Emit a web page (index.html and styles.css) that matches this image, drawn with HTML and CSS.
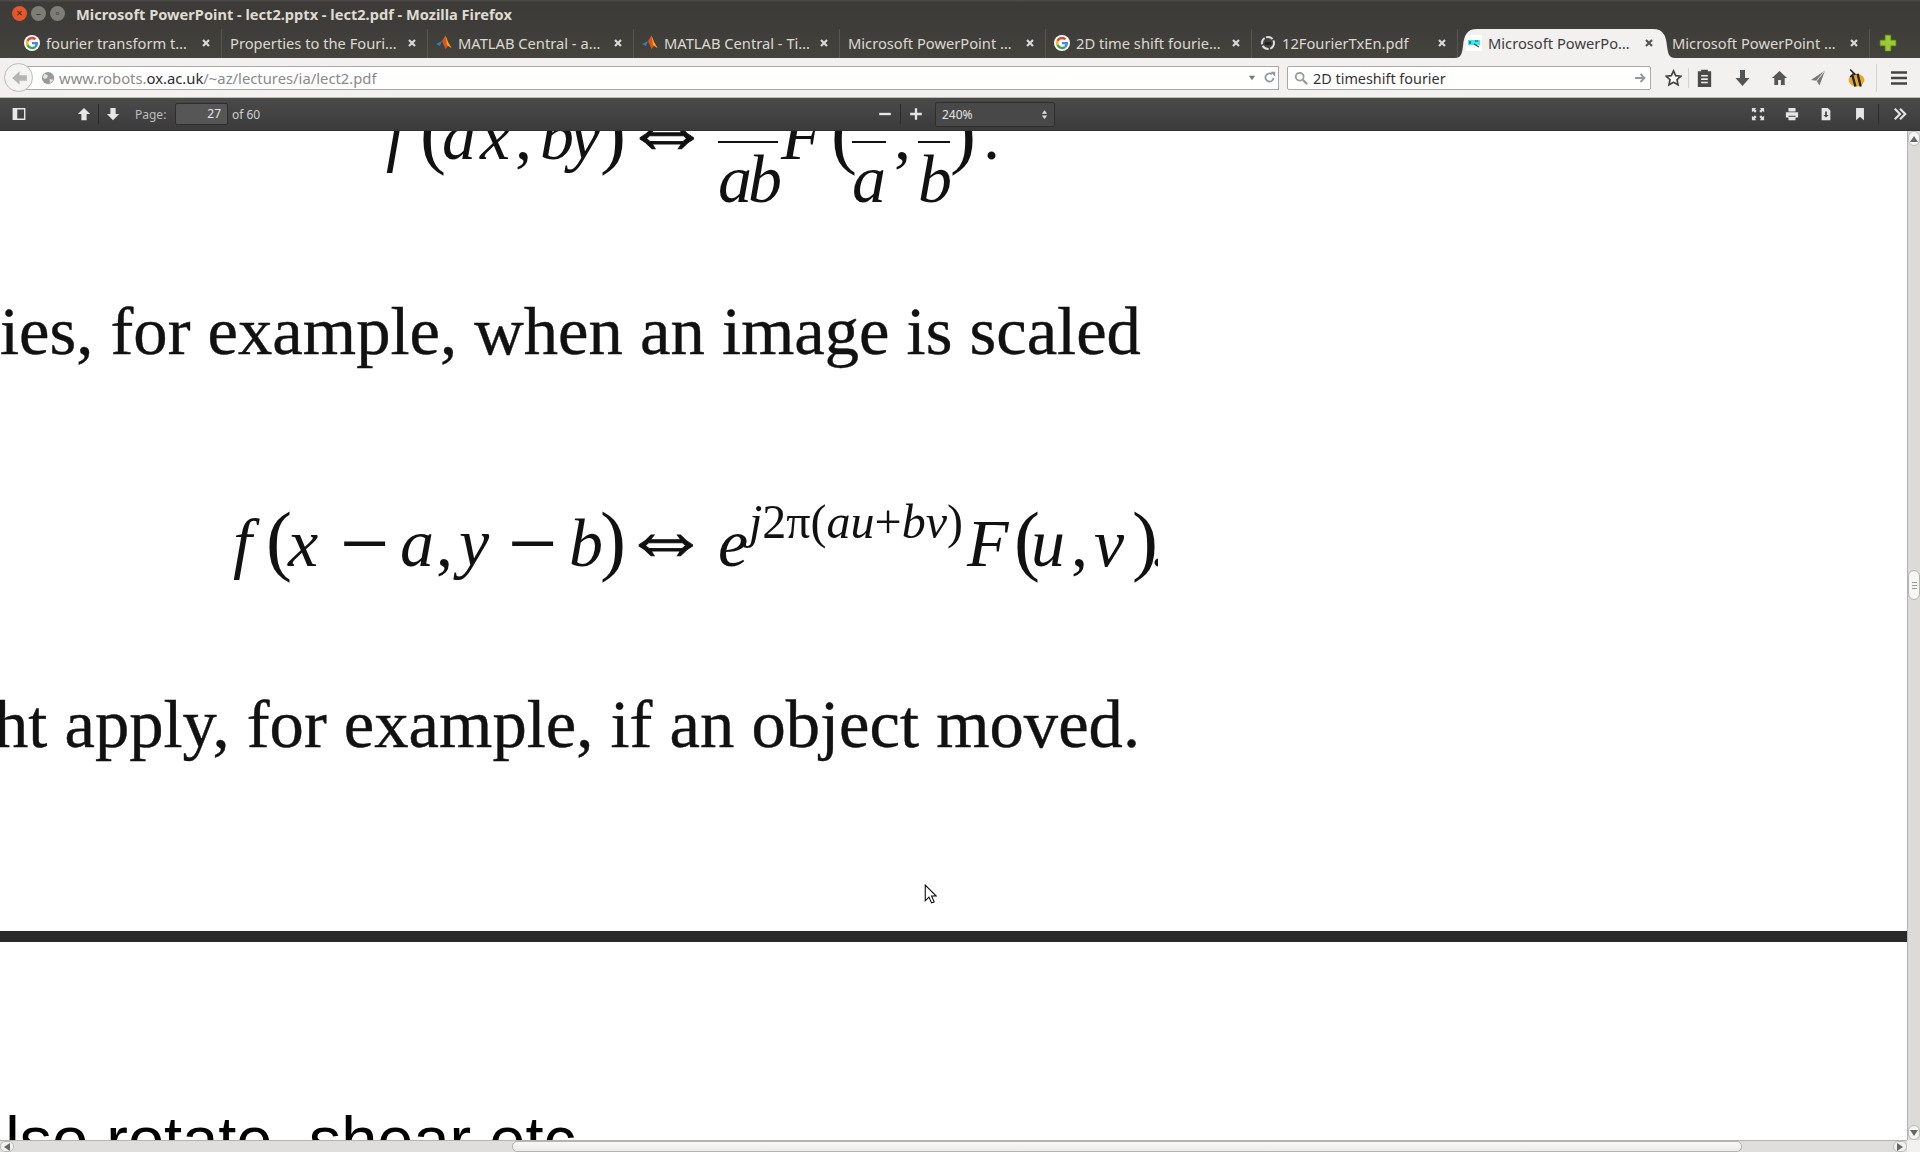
FILE: index.html
```html
<!DOCTYPE html>
<html lang="en">
<head>
    <meta charset="UTF-8">
    <title>Microsoft PowerPoint - lect2.pptx - lect2.pdf - Mozilla Firefox</title>
    <link rel="stylesheet" href="styles.css">
</head>
<body>
    <svg class="defs" width="0" height="0">
        <symbol id="g-logo" viewBox="0 0 48 48">
            <circle cx="24" cy="24" r="24" fill="#fff"/>
            <path fill="#ea4335" d="M24 13c3 0 5.400 1 7.300 2.800l5.300-5.300C33.300 7.500 29 5.500 24 5.500c-7.300 0-13.500 4.200-16.500 10.200l6.200 4.800C15.100 16.100 19.200 13 24 13z"/>
            <path fill="#4285f4" d="M42 24.500c0-1.300-.1-2.500-.3-3.700H24v7h10.100c-.4 2.300-1.800 4.300-3.800 5.600l6 4.600C39.800 34.700 42 30 42 24.500z"/>
            <path fill="#fbbc05" d="M13.700 27.500c-.4-1.100-.6-2.300-.6-3.500s.2-2.400.6-3.500l-6.200-4.800C6.200 18.200 5.500 21 5.500 24s.7 5.800 2 8.300l6.200-4.800z"/>
            <path fill="#34a853" d="M24 42.500c5 0 9.200-1.600 12.300-4.500l-6-4.600c-1.700 1.100-3.800 1.800-6.300 1.800-4.800 0-8.900-3.200-10.300-7.500l-6.200 4.800c3 6 9.200 10 16.500 10z"/>
        </symbol>
        <symbol id="m-logo" viewBox="0 0 16 16">
            <path fill="#2f7fb5" d="M0 9l4-2 2-1-2 5z"/>
            <path fill="#d9541e" d="M6 6l3.500-5.500L12 7l3.500 6-3.500-2-2.500 3z"/>
            <path fill="#f3a51e" d="M9.500.5L12 7l3.500 6-4.500-3z"/>
        </symbol>
        <symbol id="x-mark" viewBox="0 0 10 10">
            <path d="M2 2l6 6M8 2l-6 6" stroke="currentColor" stroke-width="2.200" fill="none"/>
        </symbol>
    </svg>

    <header class="titlebar">
        <div class="winbtns">
            <span class="winbtn close">×</span>
            <span class="winbtn">–</span>
            <span class="winbtn">▫</span>
        </div>
        <div class="wintitle">Microsoft PowerPoint - lect2.pptx - lect2.pdf - Mozilla Firefox</div>
    </header>

    <nav class="tabs">
        <div class="tab"><svg class="favicon"><use href="#g-logo"/></svg><span class="tabtext">fourier transform t…</span><svg class="tabx"><use href="#x-mark"/></svg></div>
        <div class="tab"><span class="tabtext">Properties to the Fouri…</span><svg class="tabx"><use href="#x-mark"/></svg></div>
        <div class="tab"><svg class="favicon"><use href="#m-logo"/></svg><span class="tabtext">MATLAB Central - a…</span><svg class="tabx"><use href="#x-mark"/></svg></div>
        <div class="tab"><svg class="favicon"><use href="#m-logo"/></svg><span class="tabtext">MATLAB Central - Ti…</span><svg class="tabx"><use href="#x-mark"/></svg></div>
        <div class="tab"><span class="tabtext">Microsoft PowerPoint …</span><svg class="tabx"><use href="#x-mark"/></svg></div>
        <div class="tab"><svg class="favicon"><use href="#g-logo"/></svg><span class="tabtext">2D time shift fourie…</span><svg class="tabx"><use href="#x-mark"/></svg></div>
        <div class="tab"><svg class="favicon" viewBox="0 0 16 16"><circle cx="8" cy="8" r="6" fill="none" stroke="#ddd" stroke-width="2" stroke-dasharray="7 1.500"/><path d="M5 7h6v3H5z" fill="#222"/></svg><span class="tabtext">12FourierTxEn.pdf</span><svg class="tabx"><use href="#x-mark"/></svg></div>
        <div class="tab active">
            <svg class="tabshape" viewBox="0 0 220 29" preserveAspectRatio="none"><path d="M0 29c6 0 7-4 8-12C9 6 12 0 22 0h176c10 0 13 6 14 17 1 8 2 12 8 12z" fill="#f2f1f0"/></svg>
            <svg class="favicon" viewBox="0 0 16 16"><rect width="16" height="16" fill="#fff"/><rect x="2" y="5" width="12" height="5" fill="#3fe6e6"/><path d="M4 6v3M9 6h3M8 9l5 3" stroke="#246" stroke-width="1.200" fill="none"/></svg>
            <span class="tabtext">Microsoft PowerPo…</span><svg class="tabx"><use href="#x-mark"/></svg>
        </div>
        <div class="tab"><span class="tabtext">Microsoft PowerPoint …</span><svg class="tabx"><use href="#x-mark"/></svg></div>
        <svg class="newtab" viewBox="0 0 16 16"><path d="M5.500 1h5v4.500H15v5h-4.500V15h-5v-4.500H1v-5h4.500z" fill="#9c3" stroke="#6d9a22" stroke-width=".6"/></svg>
    </nav>

    <div class="navbar">
        <div class="back"><svg viewBox="0 0 16 16" width="18" height="18"><path d="M8.500 2L2 8l6.500 6V10.500H15v-5H8.500z" fill="#b4b4b4"/></svg></div>
        <div class="urlbar">
            <svg class="globe" viewBox="0 0 16 16"><circle cx="8" cy="8" r="7" fill="#9a9a9a"/><path d="M4 3l4 2-1 3-3 1-2-2zM10 9l4 1-3 4-1-2z" fill="#e4e4e4"/></svg>
            <span class="url">www.robots.<b>ox.ac.uk</b>/~az/lectures/ia/lect2.pdf</span>
            <svg class="urldrop" viewBox="0 0 10 8"><path d="M1 1h8L5 7z" fill="#777"/></svg>
            <svg class="reload" viewBox="0 0 16 16"><path d="M13 8.500A5 5 0 1 1 11 4" stroke="#8c9aa5" stroke-width="2.200" fill="none"/><path d="M9 1h6v6z" fill="#8c9aa5"/></svg>
        </div>
        <div class="searchbar">
            <svg class="searchicon" viewBox="0 0 16 16"><circle cx="6.500" cy="6.500" r="4.500" stroke="#999" stroke-width="2" fill="none"/><path d="M10 10l5 5" stroke="#999" stroke-width="2.500"/></svg>
            <span class="searchtext">2D timeshift fourier</span>
            <svg class="searchgo" viewBox="0 0 12 12"><path d="M1 6h9M6.500 2l4 4-4 4" stroke="#8c9aa5" stroke-width="1.800" fill="none"/></svg>
        </div>
        <svg class="navicon star" viewBox="0 0 18 18"><path d="M9 1.500l2.300 5 5.400.6-4 3.700 1.100 5.400L9 13.500l-4.800 2.700 1.100-5.400-4-3.700 5.400-.6z" fill="#fff" stroke="#444" stroke-width="1.800"/></svg>
        <span class="navsep"></span>
        <svg class="navicon clip" viewBox="0 0 16 18"><path d="M2 3h3V1.500h6V3h3v14H2z" fill="#4a4a4a"/><path d="M5 7h6M5 10h6M5 13h6" stroke="#eee" stroke-width="1.400"/></svg>
        <svg class="navicon down" viewBox="0 0 16 18"><path d="M5.500 1h5v8H15l-7 8-7-8h4.500z" fill="#555"/></svg>
        <svg class="navicon home" viewBox="0 0 18 18"><path d="M9 1.500L1 9h2.500v7.500h4V11h3v5.500h4V9H17z" fill="#555"/></svg>
        <svg class="navicon send" viewBox="0 0 18 18"><path d="M16 1L1 11l6 1 3 5z" fill="#777"/><path d="M16 1L7 12" stroke="#eee"/></svg>
        <svg class="navicon bee" viewBox="0 0 18 18"><ellipse cx="9" cy="11" rx="7.500" ry="6" fill="#e9a820"/><path d="M5 6l3 11M10 5l3 12" stroke="#222" stroke-width="2.200"/><path d="M3 1l5 5M3 8l4-4" stroke="#222" stroke-width="1.500"/></svg>
        <span class="navsep sep2"></span>
        <svg class="navicon menu" viewBox="0 0 18 18"><path d="M1 3.500h16M1 9h16M1 14.500h16" stroke="#444" stroke-width="2.600"/></svg>
    </div>

    <div class="pdfbar">
        <svg class="pdficon sidebar" viewBox="0 0 16 16"><path d="M1.500 2h13v12h-13z" stroke="#e8e8e8" stroke-width="1.600" fill="none"/><path d="M2 2h4v12H2z" fill="#e8e8e8"/></svg>
        <svg class="pdficon up" viewBox="0 0 16 16"><path d="M8 1l7 7h-4v7H5V8H1z" fill="#e6e6e6"/></svg>
        <span class="pdfsep"></span>
        <svg class="pdficon dn" viewBox="0 0 16 16"><path d="M5 1h6v7h4l-7 7-7-7h4z" fill="#e6e6e6"/></svg>
        <span class="pagelabel">Page:</span>
        <span class="pagebox">27</span>
        <span class="pagecount">of 60</span>
        <svg class="pdficon minus" viewBox="0 0 12 12"><path d="M1 6h10" stroke="#e6e6e6" stroke-width="2"/></svg>
        <span class="pdfsep zoomsep"></span>
        <svg class="pdficon plus" viewBox="0 0 12 12"><path d="M1 6h10M6 1v10" stroke="#e6e6e6" stroke-width="2"/></svg>
        <div class="zoomselect"><span>240%</span><svg class="spin" viewBox="0 0 8 12"><path d="M4 1l3 4H1zM4 11L1 7h6z" fill="#ddd"/></svg></div>
        <svg class="pdficon fullscreen" viewBox="0 0 16 16"><path d="M1 1h5L4.500 2.500l2 2-2 2-2-2L1 6zM15 1v5l-1.500-1.500-2 2-2-2 2-2L10 1zM1 15v-5l1.500 1.500 2-2 2 2-2 2L6 15zM15 15h-5l1.500-1.500-2-2 2-2 2 2L15 10z" fill="#ddd"/></svg>
        <svg class="pdficon print" viewBox="0 0 16 16"><path d="M4 1h8v4H4zM1 6h14v6h-3v-2H4v2H1zM4 11h8v4H4z" fill="#e6e6e6"/></svg>
        <svg class="pdficon save" viewBox="0 0 16 16"><path d="M3 1h7l3 3v11H3z" fill="#e6e6e6"/><path d="M7 5h2v4h2l-3 3-3-3h2z" fill="#444"/></svg>
        <svg class="pdficon mark" viewBox="0 0 16 16"><path d="M3.500 1h9v14L8 11l-4.500 4z" fill="#e6e6e6"/></svg>
        <span class="pdfsep endsep"></span>
        <svg class="pdficon more" viewBox="0 0 16 16"><path d="M2 2l6 6-6 6M8 2l6 6-6 6" stroke="#e6e6e6" stroke-width="2.400" fill="none"/></svg>
    </div>

    <main class="viewer">
        <div class="vrow">
            <div class="canvas">
                <div class="math math1">
                    <i>f</i><span class="p">(</span><i>a</i><i>x</i><span>,</span><i>b</i><i>y</i><span class="p">)</span><span class="arrow">⇔</span><span class="frac fab"><i>ab</i></span><i>F</i><span class="p">(</span><span class="frac"><i>a</i></span><span>,</span><span class="frac fb"><i>b</i></span><span class="p">)</span><span>.</span>
                </div>
                <div class="line line1">ies, for example, when an image is scaled</div>
                <div class="math math2">
                    <i>f</i><span class="p">(</span><i>x</i><span class="op">−</span><i>a</i><span>,</span><i>y</i><span class="op">−</span><i>b</i><span class="p">)</span><span class="arrow">⇔</span><i>e</i><span class="sup"><i>j</i>2π(<i>au</i>+<i>bv</i>)</span><i>F</i><span class="p">(</span><i>u</i><span>,</span><i>v</i><span class="p">)</span><span>.</span>
                </div>
                <div class="line line2">ht apply, for example, if an object moved.</div>
                <svg class="cursor" viewBox="0 0 12 20"><path d="M1 1v15l3.500-3.500L7 18l2.500-1-2.500-5.500h4.500z" fill="#fff" stroke="#000"/></svg>
                <div class="pagegap"></div>
                <div class="slide">also rotate, shear etc</div>
            </div>
            <div class="vscroll">
                <div class="sbtn"><svg viewBox="0 0 8 6" width="8" height="6"><path d="M4 0l4 6H0z" fill="#666"/></svg></div>
                <div class="vspace"></div>
                <div class="vthumb"><span></span><span></span><span></span></div>
                <div class="vrest"></div>
                <div class="sbtn"><svg viewBox="0 0 8 6" width="8" height="6"><path d="M0 0h8L4 6z" fill="#666"/></svg></div>
            </div>
        </div>
        <div class="hscroll">
            <div class="hbtn"><svg viewBox="0 0 6 8" width="6" height="8"><path d="M0 4l6-4v8z" fill="#666"/></svg></div>
            <div class="hspace"></div>
            <div class="hthumb"></div>
            <div class="hrest"></div>
            <div class="hbtn"><svg viewBox="0 0 6 8" width="6" height="8"><path d="M6 4L0 0v8z" fill="#666"/></svg></div>
            <div class="corner"></div>
        </div>
    </main>
</body>
</html>
```

FILE: styles.css
```css
* {
    box-sizing: border-box;
}
html, body {
    margin: 0;
    height: 100%;
    overflow: hidden;
}
body {
    width: 1920px;
    height: 1152px;
    display: flex;
    flex-direction: column;
    font-family: "Noto Sans", "Open Sans", sans-serif;
    background-color: #fff;
}
.defs {
    position: absolute;
}

/* window title */
.titlebar {
    height: 29px;
    flex: none;
    display: flex;
    align-items: center;
    padding-bottom: 2px;
    background: linear-gradient(#4a4945 0, #4a4945 1px, #3c3b37 2px, #3e3d39 100%);
    color: #dfdbd2;
}
.winbtns {
    display: flex;
    gap: 4px;
    width: 76px;
    padding-left: 12px;
}
.winbtn {
    width: 15px;
    height: 15px;
    border-radius: 50%;
    background-color: #7e7d78;
    color: #3c3b37;
    font-size: 11px;
    line-height: 14px;
    text-align: center;
}
.winbtn.close {
    background-color: #e2572c;
    color: #4a1c0c;
}
.wintitle {
    font-size: 14.600px;
    font-weight: 700;
    white-space: nowrap;
}

/* tab strip */
.tabs {
    height: 29px;
    flex: none;
    display: flex;
    padding-left: 16px;
    background: linear-gradient(#3e3d39, #45433e);
}
.tab {
    position: relative;
    width: 206px;
    flex: none;
    display: flex;
    align-items: center;
    padding: 0 10px 2px 8px;
    color: #dcd9d2;
    font-size: 14.700px;
    border-right: 1px solid #57554f;
    white-space: nowrap;
}
.tab.active {
    color: #3c3c3c;
    border-right: none;
}
.tabshape {
    position: absolute;
    left: -3px;
    top: 0;
    width: 220px;
    height: 29px;
}
.favicon {
    width: 16px;
    height: 16px;
    flex: none;
    margin-right: 6px;
    position: relative;
}
.tabtext {
    flex: 1;
    overflow: hidden;
    position: relative;
}
.tabx {
    width: 10px;
    height: 10px;
    flex: none;
    color: #d8d8d8;
    position: relative;
}
.tab.active .tabx {
    color: #555;
}
.newtab {
    width: 18px;
    height: 18px;
    margin: 5px 0 0 9px;
}

/* address row */
.navbar {
    height: 40px;
    flex: none;
    display: flex;
    align-items: center;
    position: relative;
    background-color: #f2f1f0;
    border-bottom: 1px solid #bdbbb8;
    padding-left: 24px;
}
.back {
    position: absolute;
    left: 4px;
    top: 5px;
    width: 29px;
    height: 29px;
    border-radius: 50%;
    border: 1px solid #bcbcbc;
    background-color: #f4f4f3;
    display: flex;
    align-items: center;
    justify-content: center;
    z-index: 1;
}
.urlbar, .searchbar {
    height: 24px;
    display: flex;
    align-items: center;
    background-color: #fff;
    border: 1px solid #a9a8a6;
    flex: none;
}
.urlbar {
    width: 1255px;
    padding-left: 16px;
}
.globe {
    width: 14px;
    height: 14px;
    margin-right: 4px;
}
.url {
    flex: 1;
    padding-top: 1px;
    font-size: 14.800px;
    color: #8a8a8a;
}
.url b {
    font-weight: 400;
    color: #2c2c2c;
}
.urldrop {
    width: 8px;
    height: 6px;
    margin-right: 7px;
}
.reload {
    width: 13px;
    height: 13px;
    margin-right: 2px;
}
.searchbar {
    width: 364px;
    margin-left: 8px;
    padding: 0 4px 0 6px;
    border-radius: 2px;
}
.searchicon {
    width: 14px;
    height: 14px;
    margin-right: 5px;
}
.searchtext {
    flex: 1;
    padding-top: 1px;
    font-size: 14.400px;
    color: #333;
}
.searchgo {
    width: 12px;
    height: 12px;
}
.navicon {
    width: 17px;
    height: 18px;
    flex: none;
}
.navicon.star {
    margin-left: 14px;
}
.navsep {
    width: 1px;
    height: 20px;
    background-color: #d4d3d1;
    margin: 0 6px;
    flex: none;
}
.navicon.clip {
    width: 19px;
    height: 20px;
}
.navicon.down,
.navicon.home,
.navicon.bee {
    margin-left: 20px;
}
.navicon.send {
    margin-left: 22px;
}
.navicon.bee {
    width: 19px;
    height: 20px;
}
.sep2 {
    height: 28px;
    margin: 0 0 0 10px;
}
.navicon.menu {
    width: 18px;
    margin-left: 13px;
}

/* pdf.js toolbar */
.pdfbar {
    height: 33px;
    flex: none;
    display: flex;
    align-items: center;
    background: linear-gradient(#4a4a4a, #3b3b3b);
    border-bottom: 1px solid #333;
    color: #d6d6d6;
    font-size: 12px;
    padding-left: 12px;
}
.pdficon {
    width: 14px;
    height: 14px;
    flex: none;
}
.up {
    margin-left: 51px;
}
.pdfsep {
    width: 1px;
    height: 20px;
    margin: 0 7px;
    background-color: #2a2a2a;
    flex: none;
}
.pagelabel {
    margin-left: 15px;
    width: 40px;
    color: #bdbdbd;
}
.pagebox {
    width: 53px;
    height: 22px;
    line-height: 20px;
    text-align: right;
    padding-right: 6px;
    background-color: #565656;
    border: 1px solid #2e2e2e;
    border-radius: 2px;
    color: #e4e4e4;
}
.pagecount {
    margin-left: 4px;
    width: 40px;
    color: #d0d0d0;
}
.minus {
    margin-left: 606px;
}
.zoomsep {
    margin: 0 8px;
}
.zoomselect {
    width: 120px;
    height: 25px;
    margin-left: 12px;
    padding: 0 6px;
    display: flex;
    align-items: center;
    justify-content: space-between;
    border: 1px solid #2e2e2e;
    border-radius: 2px;
    background-color: #484848;
    color: #e4e4e4;
}
.spin {
    width: 7px;
    height: 11px;
}
.fullscreen {
    margin-left: 696px;
}
.print, .save, .mark {
    margin-left: 20px;
}
.endsep {
    margin: 0 0 0 11px;
    background-color: #2a2a2a;
}
.more {
    margin-left: 14px;
}

/* document area: the pdf canvas is a free page, its lines sit at their own spots */
.viewer {
    flex: 1;
    display: flex;
    flex-direction: column;
    min-height: 0;
}
.vrow {
    flex: 1;
    display: flex;
    min-height: 0;
}
.canvas {
    position: relative;
    flex: 1;
    overflow: hidden;
    background-color: #fff;
    color: #111;
}
.line {
    position: absolute;
    font-family: "Liberation Serif", serif;
    font-size: 68.600px;
    line-height: 76px;
    white-space: nowrap;
    -webkit-text-stroke: .4px #111;
    filter: blur(.6px);
}
.line1 {
    left: 0;
    top: 162px;
}
.line2 {
    left: -6px;
    top: 555px;
}

/* formulas: one grid column per glyph, all on one baseline */
.math {
    position: absolute;
    display: grid;
    grid-auto-flow: column;
    align-items: baseline;
    justify-content: start;
    font-family: "Liberation Serif", serif;
    font-size: 68px;
    line-height: 80px;
    white-space: nowrap;
    overflow: hidden;
    filter: blur(.5px);
}
.math1 {
    left: 386px;
    top: -35px;
    width: 610px;
    height: 125px;
    grid-template-columns: 34px 22px 38px 35px 25px 30px 30px 22px 96px 63px 50px 21px 42px 24px 32px 33px 12px;
}
.math2 {
    left: 233px;
    top: 352px;
    width: 925px;
    height: 120px;
    padding-top: 20px;
    grid-template-columns: 33px 22px 52px 60px 36px 23px 49px 61px 31px 21px 97px 31px 218px 47px 17px 40px 23px 38px 18px 12px;
}
.p {
    font-size: 78px;
    line-height: 70px;
}
.op {
    font-size: 88px;
    line-height: 60px;
    transform: translateY(7px);
}
.arrow {
    font-size: 90px;
    line-height: 60px;
    -webkit-text-stroke: 1px #111;
}
.frac {
    width: 34px;
    border-top: 2px solid #111;
    line-height: 72px;
    transform: translateY(43px);
}
.fab {
    width: 60px;
    letter-spacing: -4px;
}
.fb {
    width: 32px;
}
.sup {
    font-size: 48px;
    transform: translateY(-28px);
}
.cursor {
    position: absolute;
    left: 924px;
    top: 753px;
    width: 13px;
    height: 21px;
}
.pagegap {
    position: absolute;
    left: 0;
    right: 0;
    top: 800px;
    height: 11px;
    background-color: #2a2a2a;
}
.slide {
    position: absolute;
    left: -31px;
    top: 971px;
    font-family: "Liberation Sans", sans-serif;
    font-size: 65px;
    line-height: 76px;
    color: #000;
    white-space: nowrap;
}

/* gtk style scrollbars */
.vscroll {
    width: 13px;
    flex: none;
    display: flex;
    flex-direction: column;
    background-color: #dcdbd9;
    border-left: 1px solid #b5b4b2;
}
.sbtn {
    height: 15px;
    flex: none;
    display: flex;
    align-items: center;
    justify-content: center;
    background-color: #f5f5f4;
    border: 1px solid #bbb;
    border-radius: 6px;
}
.vspace {
    height: 424px;
    flex: none;
}
.vthumb {
    height: 30px;
    flex: none;
    display: flex;
    flex-direction: column;
    align-items: center;
    justify-content: center;
    gap: 2px;
    background-color: #f6f6f5;
    border: 1px solid #b5b4b2;
    border-radius: 6px;
}
.vthumb span {
    width: 5px;
    height: 1px;
    background-color: #999;
}
.vrest {
    flex: 1;
}
.hscroll {
    height: 12px;
    flex: none;
    display: flex;
    background-color: #dfdedc;
    border-top: 1px solid #b5b4b2;
}
.hbtn {
    width: 14px;
    flex: none;
    display: flex;
    align-items: center;
    justify-content: center;
    background-color: #f2f1f0;
    border: 1px solid #bbb;
    border-radius: 5px;
}
.hspace {
    width: 498px;
    flex: none;
}
.hthumb {
    width: 1230px;
    flex: none;
    background: linear-gradient(#f8f8f7, #ebeae8);
    border: 1px solid #b5b4b2;
    border-radius: 5px;
}
.hrest {
    flex: 1;
}
.corner {
    width: 13px;
    flex: none;
    background-color: #f2f1f0;
    margin-top: -1px;
}
```
